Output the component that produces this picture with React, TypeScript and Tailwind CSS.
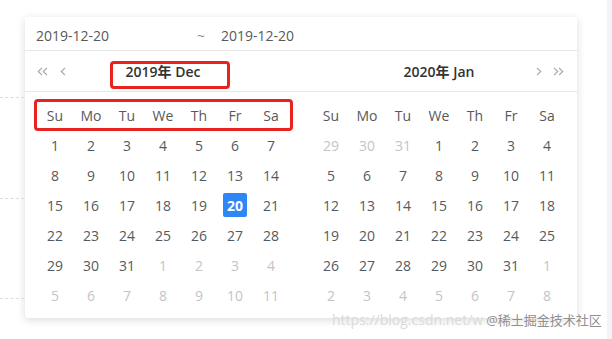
import React from 'react';

type Day = { d: number; muted?: boolean; selected?: boolean };

const WEEKDAYS = ['Su', 'Mo', 'Tu', 'We', 'Th', 'Fr', 'Sa'];

const buildMonth = (prevTail: number[], count: number, selected?: number): Day[] => {
  const days: Day[] = prevTail.map((d) => ({ d, muted: true }));
  for (let i = 1; i <= count; i++) days.push({ d: i, selected: i === selected });
  let next = 1;
  while (days.length < 42) days.push({ d: next++, muted: true });
  return days;
};

const DEC = buildMonth([], 31, 20);
const JAN = buildMonth([29, 30, 31], 31);

const Chevron = ({ dir }: { dir: 'left' | 'right' }) => (
  <svg width="6" height="9" viewBox="0 0 6 9" fill="none">
    <path
      d={dir === 'left' ? 'M5 0.8 L1.3 4.5 L5 8.2' : 'M1 0.8 L4.7 4.5 L1 8.2'}
      stroke="#a8a8a8"
      strokeWidth="1.2"
    />
  </svg>
);

const DoubleChevron = ({ dir }: { dir: 'left' | 'right' }) => (
  <svg width="11" height="9" viewBox="0 0 11 9" fill="none">
    <path
      d={
        dir === 'left'
          ? 'M5 0.8 L1.3 4.5 L5 8.2 M10 0.8 L6.3 4.5 L10 8.2'
          : 'M1 0.8 L4.7 4.5 L1 8.2 M6 0.8 L9.7 4.5 L6 8.2'
      }
      stroke="#a8a8a8"
      strokeWidth="1.2"
    />
  </svg>
);

const MonthBody = ({ days }: { days: Day[] }) => (
  <div className="px-3 pt-2 pb-2">
    <div className="grid grid-cols-7">
      {WEEKDAYS.map((w) => (
        <div key={w} className="h-[30px] flex items-center justify-center text-[14px] text-[#595959]">
          {w}
        </div>
      ))}
      {days.map((day, i) => (
        <div key={i} className="h-[30px] flex items-center justify-center">
          {day.selected ? (
            <span className="w-6 h-6 rounded-[2px] bg-[#2e86f7] text-white font-bold text-[14px] flex items-center justify-center">
              {day.d}
            </span>
          ) : (
            <span className={`text-[14px] ${day.muted ? 'text-[#c4c4c4]' : 'text-[#595959]'}`}>
              {day.d}
            </span>
          )}
        </div>
      ))}
    </div>
  </div>
);

export default function App() {
  return (
    <div className="relative w-[612px] h-[339px] overflow-hidden bg-white font-['Open_Sans','Noto_Sans_CJK_SC',sans-serif]">
      {/* page bits behind the popup */}
      <div className="absolute left-0 top-[97px] w-[24px] border-t border-dashed border-[#dcdcdc]" />
      <div className="absolute left-0 top-[198px] w-[24px] border-t border-dashed border-[#dcdcdc]" />
      <div className="absolute left-0 top-[298px] w-[24px] border-t border-dashed border-[#dcdcdc]" />
      <div className="absolute right-0 top-0 h-full w-[5px] bg-[#f4f4f6]" />

      <div className="pl-[25px] pt-[17px]">
        <div className="w-[552px] bg-white rounded-[3px] shadow-[0_2px_8px_rgba(0,0,0,0.15)]">
          {/* inputs */}
          <div className="h-[34px] pt-[4px] flex items-center border-b border-[#e8e8e8] text-[14px] text-[#595959]">
            <span className="w-[165px] pl-[11px]">2019-12-20</span>
            <span className="w-[22px] text-center text-[#8c8c8c]">~</span>
            <span className="pl-[9px]">2019-12-20</span>
          </div>

          {/* headers */}
          <div className="flex h-[41px] border-b border-[#e8e8e8]">
            <div className="w-[276px] grid grid-cols-[1fr_auto_1fr] items-center">
              <div className="flex items-center gap-[12px] pl-[12px]">
                <DoubleChevron dir="left" />
                <Chevron dir="left" />
              </div>
              <span className="text-[14px] font-semibold text-[#333333]">2019年 Dec</span>
              <div />
            </div>
            <div className="w-[276px] grid grid-cols-[1fr_auto_1fr] items-center">
              <div />
              <span className="text-[14px] font-semibold text-[#333333]">2020年 Jan</span>
              <div className="flex items-center justify-end gap-[11px] pr-[13px]">
                <Chevron dir="right" />
                <DoubleChevron dir="right" />
              </div>
            </div>
          </div>

          {/* month bodies */}
          <div className="flex">
            <div className="w-[276px]">
              <MonthBody days={DEC} />
            </div>
            <div className="w-[276px]">
              <MonthBody days={JAN} />
            </div>
          </div>
        </div>
      </div>

      {/* annotation boxes */}
      <div className="absolute left-[110px] top-[61px] w-[120px] h-[28px] border-[3px] border-[#e8231f] rounded-[4px]" />
      <div className="absolute left-[34px] top-[99px] w-[259px] h-[32px] border-[3px] border-[#e8231f] rounded-[4px]" />

      {/* watermark */}
      <div className="absolute left-[332px] top-[311px] flex items-center leading-[18px] whitespace-nowrap">
        <span className="text-[14px] text-[#dadada]">https://blog.csdn.net/w</span>
        <span className="ml-[3px] text-[13px] text-[#8f8f8f] [text-shadow:0_0_2px_#fff]">@稀土掘金技术社区</span>
      </div>
    </div>
  );
}
